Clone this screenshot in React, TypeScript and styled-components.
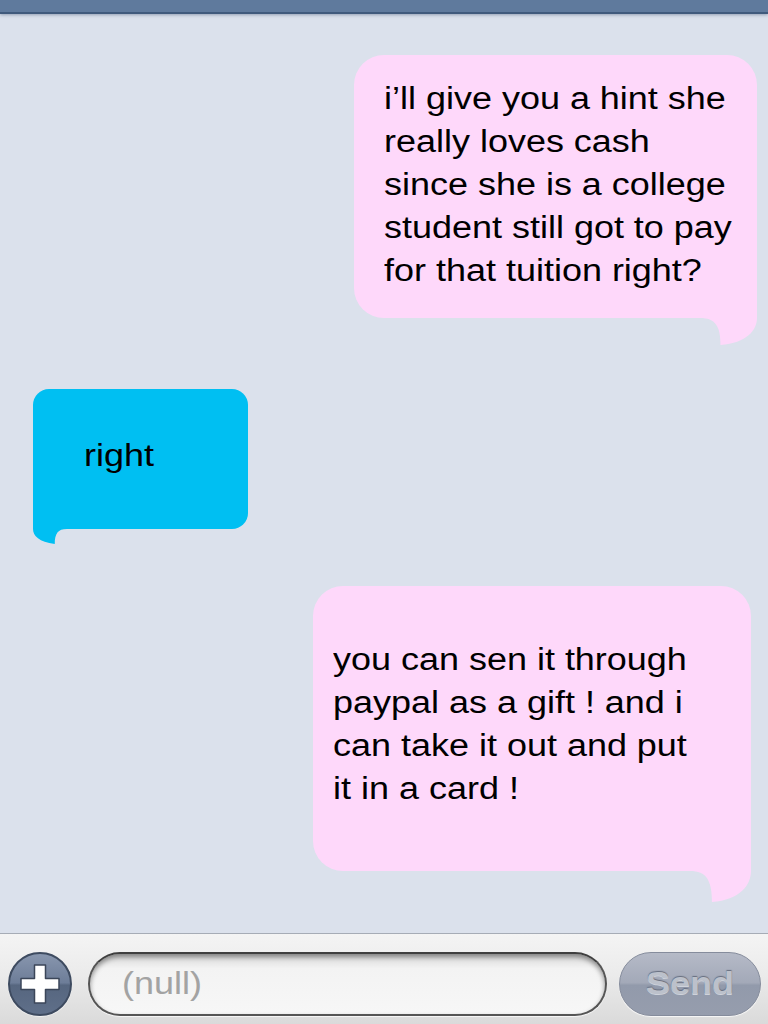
import React from "react";
import styled, { createGlobalStyle } from "styled-components";

const Global = createGlobalStyle`
  html, body { margin: 0; padding: 0; }
  body { background: #dbe1ec; font-family: "Liberation Sans", Arial, sans-serif; }
  #root { width: 768px; height: 1024px; overflow: hidden; }
`;

const Screen = styled.div`
  width: 768px;
  height: 1024px;
  display: flex;
  flex-direction: column;
  background: #dbe1ec;
`;

const TopBar = styled.div`
  height: 12px;
  flex: none;
  background: #5f7a9d;
  border-bottom: 2px solid #405a7c;
  box-shadow: 0 1px 3px rgba(60, 80, 110, 0.45);
  position: relative;
  z-index: 1;
`;

const Thread = styled.div`
  flex: 1;
  display: flex;
  flex-direction: column;
  padding-top: 41px;
`;

type Side = "left" | "right";

const Row = styled.div<{ $side: Side; $gap: number; $edge: number }>`
  display: flex;
  justify-content: ${(p) => (p.$side === "right" ? "flex-end" : "flex-start")};
  margin-top: ${(p) => p.$gap}px;
  padding-left: ${(p) => (p.$side === "left" ? p.$edge : 0)}px;
  padding-right: ${(p) => (p.$side === "right" ? p.$edge : 0)}px;
`;

const Bubble = styled.div<{
  $bg: string;
  $w: number;
  $h: number;
  $pad: string;
  $r: number;
  $side: Side;
}>`
  position: relative;
  box-sizing: border-box;
  width: ${(p) => p.$w}px;
  height: ${(p) => p.$h}px;
  padding: ${(p) => p.$pad};
  background: ${(p) => p.$bg};
  border-radius: ${(p) => p.$r}px;
  ${(p) =>
    p.$side === "right"
      ? "border-bottom-right-radius: 0;"
      : "border-bottom-left-radius: 0;"}
`;

const Text = styled.div`
  display: inline-block;
  font-family: "Liberation Sans", Arial, sans-serif;
  font-size: 31px;
  line-height: 43px;
  color: #000;
  white-space: nowrap;
  transform: scaleX(1.16);
  transform-origin: left top;
`;

const Tail = styled.svg<{ $side: Side; $w: number; $h: number; $drop: number }>`
  position: absolute;
  overflow: visible;
  width: ${(p) => p.$w}px;
  height: ${(p) => p.$h}px;
  bottom: ${(p) => -p.$drop}px;
  ${(p) => (p.$side === "right" ? "right: 0;" : "left: 0; transform: scaleX(-1);")}
`;

const Toolbar = styled.div`
  height: 91px;
  flex: none;
  box-sizing: border-box;
  border-top: 1px solid #a6acb6;
  background: linear-gradient(#f4f4f4, #ebebeb 45%, #dadada);
  display: flex;
  align-items: flex-start;
  padding: 18px 6px 0 8px;
  gap: 14px;
`;

const PlusButton = styled.div`
  width: 64px;
  height: 64px;
  flex: none;
  border-radius: 50%;
  box-sizing: border-box;
  border: 2px solid #3e4b60;
  background: linear-gradient(#8896ae, #6d7d98 48%, #56667f 52%, #5f6f89);
  display: flex;
  align-items: center;
  justify-content: center;
  box-shadow: 0 1px 1px rgba(255, 255, 255, 0.7);
`;

const InputField = styled.div`
  flex: none;
  width: 519px;
  height: 64px;
  box-sizing: border-box;
  border-radius: 32px;
  border: 2px solid #555;
  border-top-color: #3f3f3f;
  background: linear-gradient(#d6d6d6, #f3f3f3 24%, #f7f7f7);
  box-shadow: inset 0 3px 5px rgba(0, 0, 0, 0.4), 0 1px 1px rgba(255, 255, 255, 0.8);
  display: flex;
  align-items: center;
  padding-left: 32px;
  margin-left: 2px;
`;

const Placeholder = styled.span`
  display: inline-block;
  font-family: "Liberation Sans", Arial, sans-serif;
  font-size: 31px;
  color: #a3a3a3;
  transform: scaleX(1.16);
  transform-origin: left center;
`;

const SendButton = styled.div`
  flex: none;
  width: 142px;
  height: 64px;
  box-sizing: border-box;
  margin-left: -2px;
  border-radius: 32px;
  border: 1px solid #858c9c;
  background: linear-gradient(#b5bac7, #a3a9b8 48%, #929aab 52%, #969dad);
  box-shadow: 0 1px 1px rgba(255, 255, 255, 0.8);
  display: flex;
  align-items: center;
  justify-content: center;
`;

const SendLabel = styled.span`
  display: inline-block;
  font-family: "Liberation Sans", Arial, sans-serif;
  font-weight: bold;
  font-size: 31px;
  color: #bcc1cb;
  text-shadow: 0 -1px 1px #656c7d, 0 1px 0 #cfd3db;
  transform: scaleX(1.16);
`;

const PINK = "#fed8fa";
const BLUE = "#00bff2";

const TailShape: React.FC<{ fill: string; side: Side; w: number; h: number; drop: number; body: number }> = ({
  fill,
  side,
  w,
  h,
  drop,
  body,
}) => {
  const tipX = w * 0.36;
  const below = h - body;
  return (
    <Tail $side={side} $w={w} $h={h} $drop={drop} viewBox={`0 0 ${w} ${h}`}>
      <path
        d={`M-1 -1 L-1 ${body} L0 ${body} C${tipX * 0.75} ${body} ${tipX} ${body + below * 0.3} ${tipX} ${h}
            C${w * 0.82} ${h - 2} ${w} ${body + below * 0.45} ${w} ${body} L${w} -1 Z`}
        fill={fill}
      />
    </Tail>
  );
};

export default function App() {
  return (
    <Screen>
      <Global />
      <TopBar />
      <Thread>
        <Row $side="right" $gap={0} $edge={11}>
          <Bubble $bg={PINK} $w={403} $h={263} $pad="22px 0 0 30px" $r={30} $side="right">
            <Text>
              i’ll give you a hint she
              <br />
              really loves cash
              <br />
              since she is a college
              <br />
              student still got to pay
              <br />
              for that tuition right?
            </Text>
            <TailShape fill={PINK} side="right" w={57} h={45} drop={27} body={18} />
          </Bubble>
        </Row>
        <Row $side="left" $gap={71} $edge={33}>
          <Bubble $bg={BLUE} $w={215} $h={140} $pad="45px 0 0 51px" $r={16} $side="left">
            <Text>right</Text>
            <TailShape fill={BLUE} side="left" w={34} h={30} drop={15} body={15} />
          </Bubble>
        </Row>
        <Row $side="right" $gap={57} $edge={17}>
          <Bubble $bg={PINK} $w={438} $h={285} $pad="52px 0 0 20px" $r={30} $side="right">
            <Text>
              you can sen it through
              <br />
              paypal as a gift ! and i
              <br />
              can take it out and put
              <br />
              it in a card !
            </Text>
            <TailShape fill={PINK} side="right" w={61} h={47} drop={31} body={16} />
          </Bubble>
        </Row>
      </Thread>
      <Toolbar>
        <PlusButton>
          <svg width="44" height="44" viewBox="0 0 44 44">
            <path
              d="M16.5 3 H27.5 V16.5 H41 V27.5 H27.5 V41 H16.5 V27.5 H3 V16.5 H16.5 Z"
              fill="#ffffff"
              stroke="#3b4659"
              strokeWidth="1.5"
              strokeLinejoin="round"
            />
          </svg>
        </PlusButton>
        <InputField>
          <Placeholder>(null)</Placeholder>
        </InputField>
        <SendButton>
          <SendLabel>Send</SendLabel>
        </SendButton>
      </Toolbar>
    </Screen>
  );
}
